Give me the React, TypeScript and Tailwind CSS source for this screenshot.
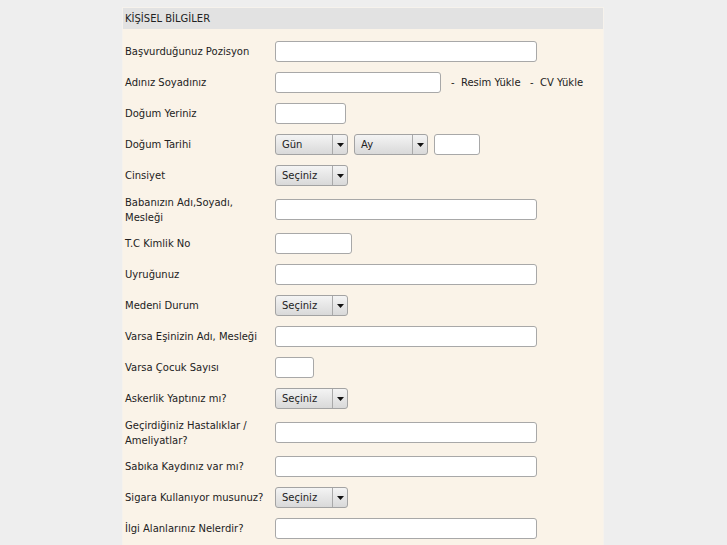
import React from "react";

type Field =
  | { kind: "input"; w: string }
  | { kind: "select"; label: string }
  | { kind: "date" }
  | { kind: "name" };

interface Row {
  label: string;
  tall?: boolean;
  field: Field;
}

const rows: Row[] = [
  { label: "Başvurduğunuz Pozisyon", field: { kind: "input", w: "w-[262px]" } },
  { label: "Adınız Soyadınız", field: { kind: "name" } },
  { label: "Doğum Yeriniz", field: { kind: "input", w: "w-[71px]" } },
  { label: "Doğum Tarihi", field: { kind: "date" } },
  { label: "Cinsiyet", field: { kind: "select", label: "Seçiniz" } },
  { label: "Babanızın Adı,Soyadı, Mesleği", tall: true, field: { kind: "input", w: "w-[262px]" } },
  { label: "T.C Kimlik No", field: { kind: "input", w: "w-[77px]" } },
  { label: "Uyruğunuz", field: { kind: "input", w: "w-[262px]" } },
  { label: "Medeni Durum", field: { kind: "select", label: "Seçiniz" } },
  { label: "Varsa Eşinizin Adı, Mesleği", field: { kind: "input", w: "w-[262px]" } },
  { label: "Varsa Çocuk Sayısı", field: { kind: "input", w: "w-[39px]" } },
  { label: "Askerlik Yaptınız mı?", field: { kind: "select", label: "Seçiniz" } },
  { label: "Geçirdiğiniz Hastalıklar / Ameliyatlar?", tall: true, field: { kind: "input", w: "w-[262px]" } },
  { label: "Sabıka Kaydınız var mı?", field: { kind: "input", w: "w-[262px]" } },
  { label: "Sigara Kullanıyor musunuz?", field: { kind: "select", label: "Seçiniz" } },
  { label: "İlgi Alanlarınız Nelerdir?", field: { kind: "input", w: "w-[262px]" } },
];

function TextBox({ w }: { w: string }) {
  return (
    <input
      className={`${w} h-[21px] rounded-[3px] border border-[#a8a8a8] bg-white px-1 outline-none`}
    />
  );
}

function Select({ label, w = "w-[73px]" }: { label: string; w?: string }) {
  return (
    <div
      className={`${w} flex h-[21px] items-stretch rounded-[3px] border border-[#a3a3a3] bg-gradient-to-b from-[#f4f4f4] to-[#d9d9d9] text-[10px] text-[#222]`}
    >
      <span className="flex flex-1 items-center pl-[6px]">{label}</span>
      <span className="flex w-[15px] items-center justify-center border-l border-[#a9a9a9]">
        <svg width="7" height="4" viewBox="0 0 7 4">
          <path d="M0 0h7L3.5 4z" fill="#111" />
        </svg>
      </span>
    </div>
  );
}

function FieldCell({ field }: { field: Field }) {
  if (field.kind === "input") return <TextBox w={field.w} />;
  if (field.kind === "select") return <Select label={field.label} />;
  if (field.kind === "date") {
    return (
      <div className="flex items-center gap-[6px]">
        <Select label="Gün" />
        <Select label="Ay" w="w-[74px]" />
        <TextBox w="w-[46px]" />
      </div>
    );
  }
  return (
    <div className="flex items-center">
      <TextBox w="w-[166px]" />
      <span className="ml-[10px] whitespace-pre text-[10px] text-[#222]">
        -  Resim Yükle   -  CV Yükle
      </span>
    </div>
  );
}

export default function App() {
  return (
    <div
      className="min-h-[545px] bg-[#eeeeee] pt-[7px]"
      style={{ fontFamily: '"DejaVu Sans", sans-serif' }}
    >
      <div className="ml-[122px] w-[482px] border border-b-0 border-[#f6f2ec] bg-[#faf3e8] pb-4">
        <div className="flex h-[21px] items-center bg-[#e2e2e2] pl-[2px] text-[10px] text-[#222]">
          KİŞİSEL BİLGİLER
        </div>
        <div className="pt-[7px]">
          {rows.map((r) => (
            <div
              key={r.label}
              className={`flex items-center ${r.tall ? "h-[37px]" : "h-[31px]"}`}
            >
              <div className="w-[152px] pl-[2px] pr-1 text-[10px] leading-[15px] text-[#222]">
                {r.label}
              </div>
              <FieldCell field={r.field} />
            </div>
          ))}
        </div>
      </div>
    </div>
  );
}
